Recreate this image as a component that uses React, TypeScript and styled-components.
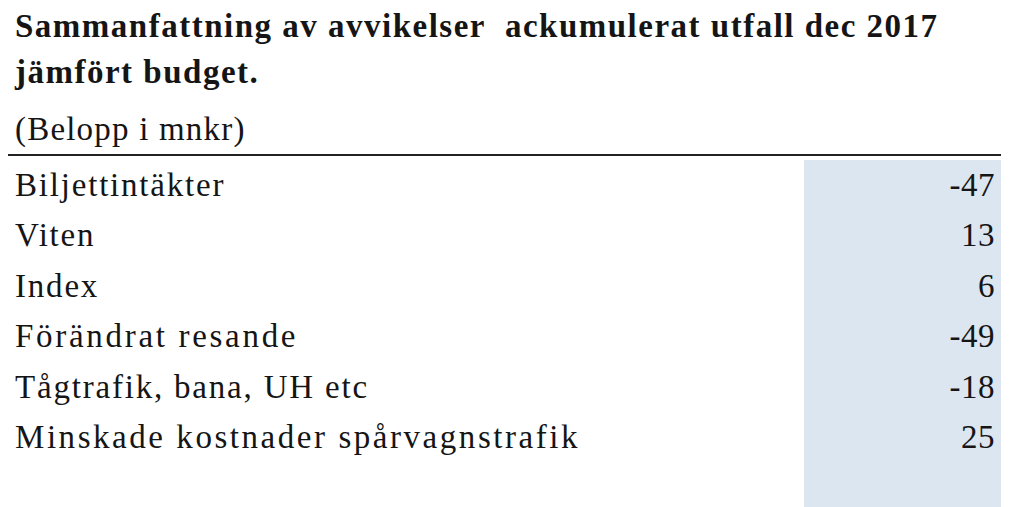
import React from 'react'
import styled, { createGlobalStyle } from 'styled-components'

const GlobalStyle = createGlobalStyle`
  html, body {
    margin: 0;
    padding: 0;
    background: #fff;
  }
  body {
    font-family: "Liberation Serif", "Times New Roman", serif;
    color: #151515;
  }
`

const Page = styled.div`
  display: flex;
  flex-direction: column;
  height: 100vh;
  width: 993px;
  margin-left: 8px;
`

const Title = styled.h1`
  margin: 3px 0 0;
  padding-left: 7px;
  font-size: 33px;
  font-weight: 700;
  line-height: 46px;
  letter-spacing: 1.5px;
  white-space: pre-wrap;
`

const Unit = styled.div`
  margin-top: 11px;
  padding: 0 0 2px 7px;
  font-size: 33px;
  line-height: 46px;
  letter-spacing: 1.2px;
  border-bottom: 2px solid #222;
`

const Table = styled.div`
  flex: 1;
  margin-top: 4px;
  display: grid;
  grid-template-columns: 1fr 197px;
  grid-template-rows: repeat(6, 50.4px) 1fr;
`

const Label = styled.div<{ $track: number }>`
  padding-left: 7px;
  font-size: 33px;
  line-height: 50.4px;
  letter-spacing: ${p => p.$track}px;
  white-space: nowrap;
`

const Value = styled.div`
  background: #dce6f1;
  padding-right: 6px;
  text-align: right;
  font-size: 33px;
  line-height: 50.4px;
  letter-spacing: 0.5px;
  grid-column: 2;
`

const rows: { label: string; value: string; track: number }[] = [
  { label: 'Biljettintäkter', value: '-47', track: 1.8 },
  { label: 'Viten', value: '13', track: 1.8 },
  { label: 'Index', value: '6', track: 1.8 },
  { label: 'Förändrat resande', value: '-49', track: 2.7 },
  { label: 'Tågtrafik, bana, UH etc', value: '-18', track: 1.8 },
  { label: 'Minskade kostnader spårvagnstrafik', value: '25', track: 2.55 },
]

export default function App() {
  return (
    <>
      <GlobalStyle />
      <Page>
        <Title>
          {'Sammanfattning av avvikelser  ackumulerat utfall dec 2017\njämfört budget.'}
        </Title>
        <Unit>(Belopp i mnkr)</Unit>
        <Table>
          {rows.map(row => (
            <React.Fragment key={row.label}>
              <Label $track={row.track}>{row.label}</Label>
              <Value>{row.value}</Value>
            </React.Fragment>
          ))}
          <Value />
        </Table>
      </Page>
    </>
  )
}
